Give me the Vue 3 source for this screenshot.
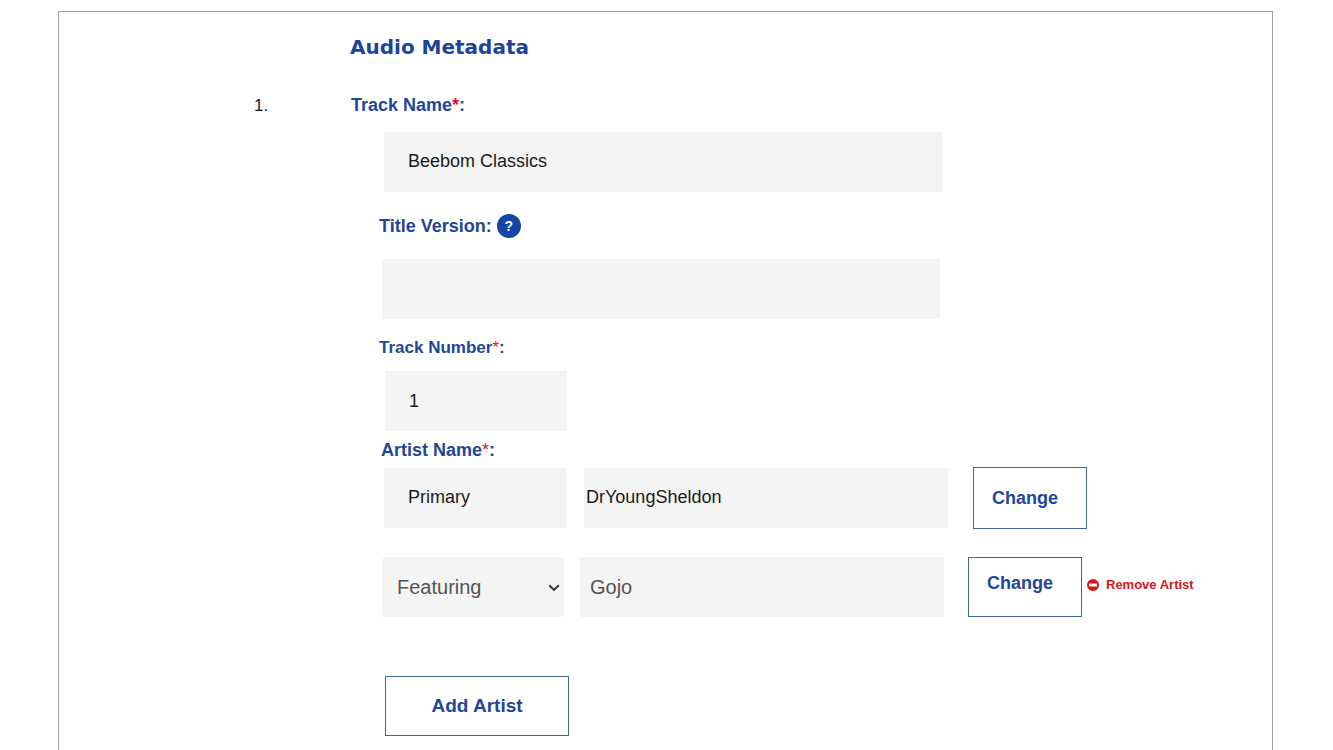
<script setup>
import { ref } from 'vue'

const trackName = ref('Beebom Classics')
const titleVersion = ref('')
const trackNumber = ref('1')
const primaryRole = ref('Primary')
const primaryArtist = ref('DrYoungSheldon')
const featuredRole = ref('Featuring')
const featuredArtist = ref('Gojo')
</script>

<template>
  <main class="card">
    <h1 class="heading">Audio Metadata</h1>
    <form class="track" @submit.prevent>
      <span class="index">1.</span>
      <div class="fields">
        <label class="label lead" for="track-name">Track Name<span class="req">*</span>:</label>
        <input id="track-name" v-model="trackName" class="field wide main" type="text" />

        <div class="label-row">
          <label class="label" for="title-version">Title Version:</label>
          <button class="help" type="button" aria-label="About title version">?</button>
        </div>
        <input id="title-version" v-model="titleVersion" class="field wide alt" type="text" />

        <label class="label number" for="track-number">Track Number<span class="req">*</span>:</label>
        <input id="track-number" v-model="trackNumber" class="field short indent digits" type="text" />

        <label class="label artist" for="artist-name">Artist Name<span class="req">*</span>:</label>
        <div class="artist-row main">
          <input v-model="primaryRole" class="field short" type="text" aria-label="Artist role" />
          <input id="artist-name" v-model="primaryArtist" class="field name snug" type="text" />
          <button class="btn change" type="button">Change</button>
        </div>

        <div class="artist-row alt featured">
          <div class="select-box">
            <select v-model="featuredRole" class="field short large" aria-label="Second artist role">
              <option>Featuring</option>
              <option>Primary</option>
            </select>
            <svg class="chevron" viewBox="0 0 12 8" width="12" height="8" aria-hidden="true">
              <path d="M1.2 1.3 L6 6 L10.8 1.3" fill="none" stroke="#333" stroke-width="1.9" />
            </svg>
          </div>
          <input v-model="featuredArtist" class="field name large" type="text" aria-label="Second artist name" />
          <button class="btn change raised" type="button">Change</button>
          <button class="remove" type="button">
            <svg viewBox="0 0 12 12" width="12" height="12" aria-hidden="true">
              <circle cx="6" cy="6" r="6" fill="#e01218" />
              <rect x="2" y="4.5" width="8" height="3" rx="0.5" fill="#fff" />
            </svg>
            Remove Artist
          </button>
        </div>

        <button class="btn add indent" type="button">Add Artist</button>
      </div>
    </form>
  </main>
</template>

<style>
body {
  background: #fff;
}
</style>

<style scoped>
.card,
.card * {
  box-sizing: border-box;
}
.card {
  display: flow-root;
  min-height: calc(100vh - 11px);
  margin: 11px 60px 0 58px;
  border: 1px solid #a3a3a3;
  border-bottom: 0;
  font-family: "Liberation Sans", Arial, sans-serif;
  color: #1b1b1b;
}
.heading {
  margin: 22px 0 0 291px;
  font: 900 20px/26px "Arial Black", "DejaVu Sans", sans-serif;
  color: #1b449c;
}
.track {
  display: grid;
  grid-template-columns: 96px minmax(0, 1fr);
  margin: 34px 0 0 195px;
}
.index {
  font-size: 17px;
  line-height: 24px;
}
.fields {
  display: flex;
  flex-direction: column;
  align-items: flex-start;
}
.label {
  font-size: 18px;
  font-weight: 700;
  line-height: 22px;
  color: #1f4799;
}
.lead {
  margin-left: 1px;
}
.req {
  font-weight: 400;
  color: #e01218;
}
.lead .req {
  font-weight: 700;
}
.label-row {
  display: flex;
  align-items: center;
  gap: 5px;
  margin: 22px 0 21px 29px;
}
.help {
  width: 24px;
  height: 24px;
  padding: 0;
  border: 0;
  border-radius: 50%;
  background: #1544a8;
  color: #fff;
  font: 700 14px/24px "Liberation Sans", Arial, sans-serif;
}
.field {
  height: 60px;
  padding: 0 24px 2px;
  border: 0;
  border-radius: 0;
  background: #f4f4f4;
  color: #1b1b1b;
  font: 18px/24px "Liberation Sans", Arial, sans-serif;
}
.main {
  margin-left: 34px;
}
.alt {
  margin-left: 32px;
}
.indent {
  margin-left: 35px;
}
.wide {
  width: 558px;
  max-width: calc(100% - 34px);
}
.short {
  width: 182px;
}
.name {
  flex: 0 1 364px;
  min-width: 0;
}
.snug {
  padding-left: 2px;
}
.digits {
  padding: 0 24px;
}
.large {
  padding: 0 10px;
  color: #555;
  font-size: 20px;
}
#track-name {
  margin-top: 16px;
}
.number {
  margin: 18px 0 12px 29px;
  font-size: 17px;
}
.artist {
  margin: 8px 0 6px 31px;
}
.artist-row {
  display: flex;
  align-items: center;
  align-self: stretch;
  gap: 18px;
}
.featured {
  gap: 16px;
  margin-top: 28px;
}
.select-box {
  position: relative;
}
.select-box select {
  display: block;
  padding-left: 15px;
  border-radius: 4px;
  appearance: none;
}
.chevron {
  position: absolute;
  right: 4px;
  top: 27px;
  pointer-events: none;
}
.btn {
  flex: none;
  height: 60px;
  padding: 0;
  border: 1px solid #42669f;
  background: #fff;
  color: #1f4799;
  font: 700 18px/24px "Liberation Sans", Arial, sans-serif;
}
.change {
  width: 114px;
  height: 62px;
  margin-left: 7px;
  padding-right: 10px;
}
.raised {
  height: 60px;
  margin-left: 8px;
  padding: 0 10px 8px 0;
}
.remove {
  display: flex;
  align-items: center;
  gap: 7px;
  margin: 0 0 4px -11px;
  padding: 0;
  border: 0;
  background: none;
  color: #d4151b;
  font: 700 13px/20px "Liberation Sans", Arial, sans-serif;
  white-space: nowrap;
}
.add {
  width: 184px;
  margin-top: 59px;
  font-size: 19px;
}
</style>
